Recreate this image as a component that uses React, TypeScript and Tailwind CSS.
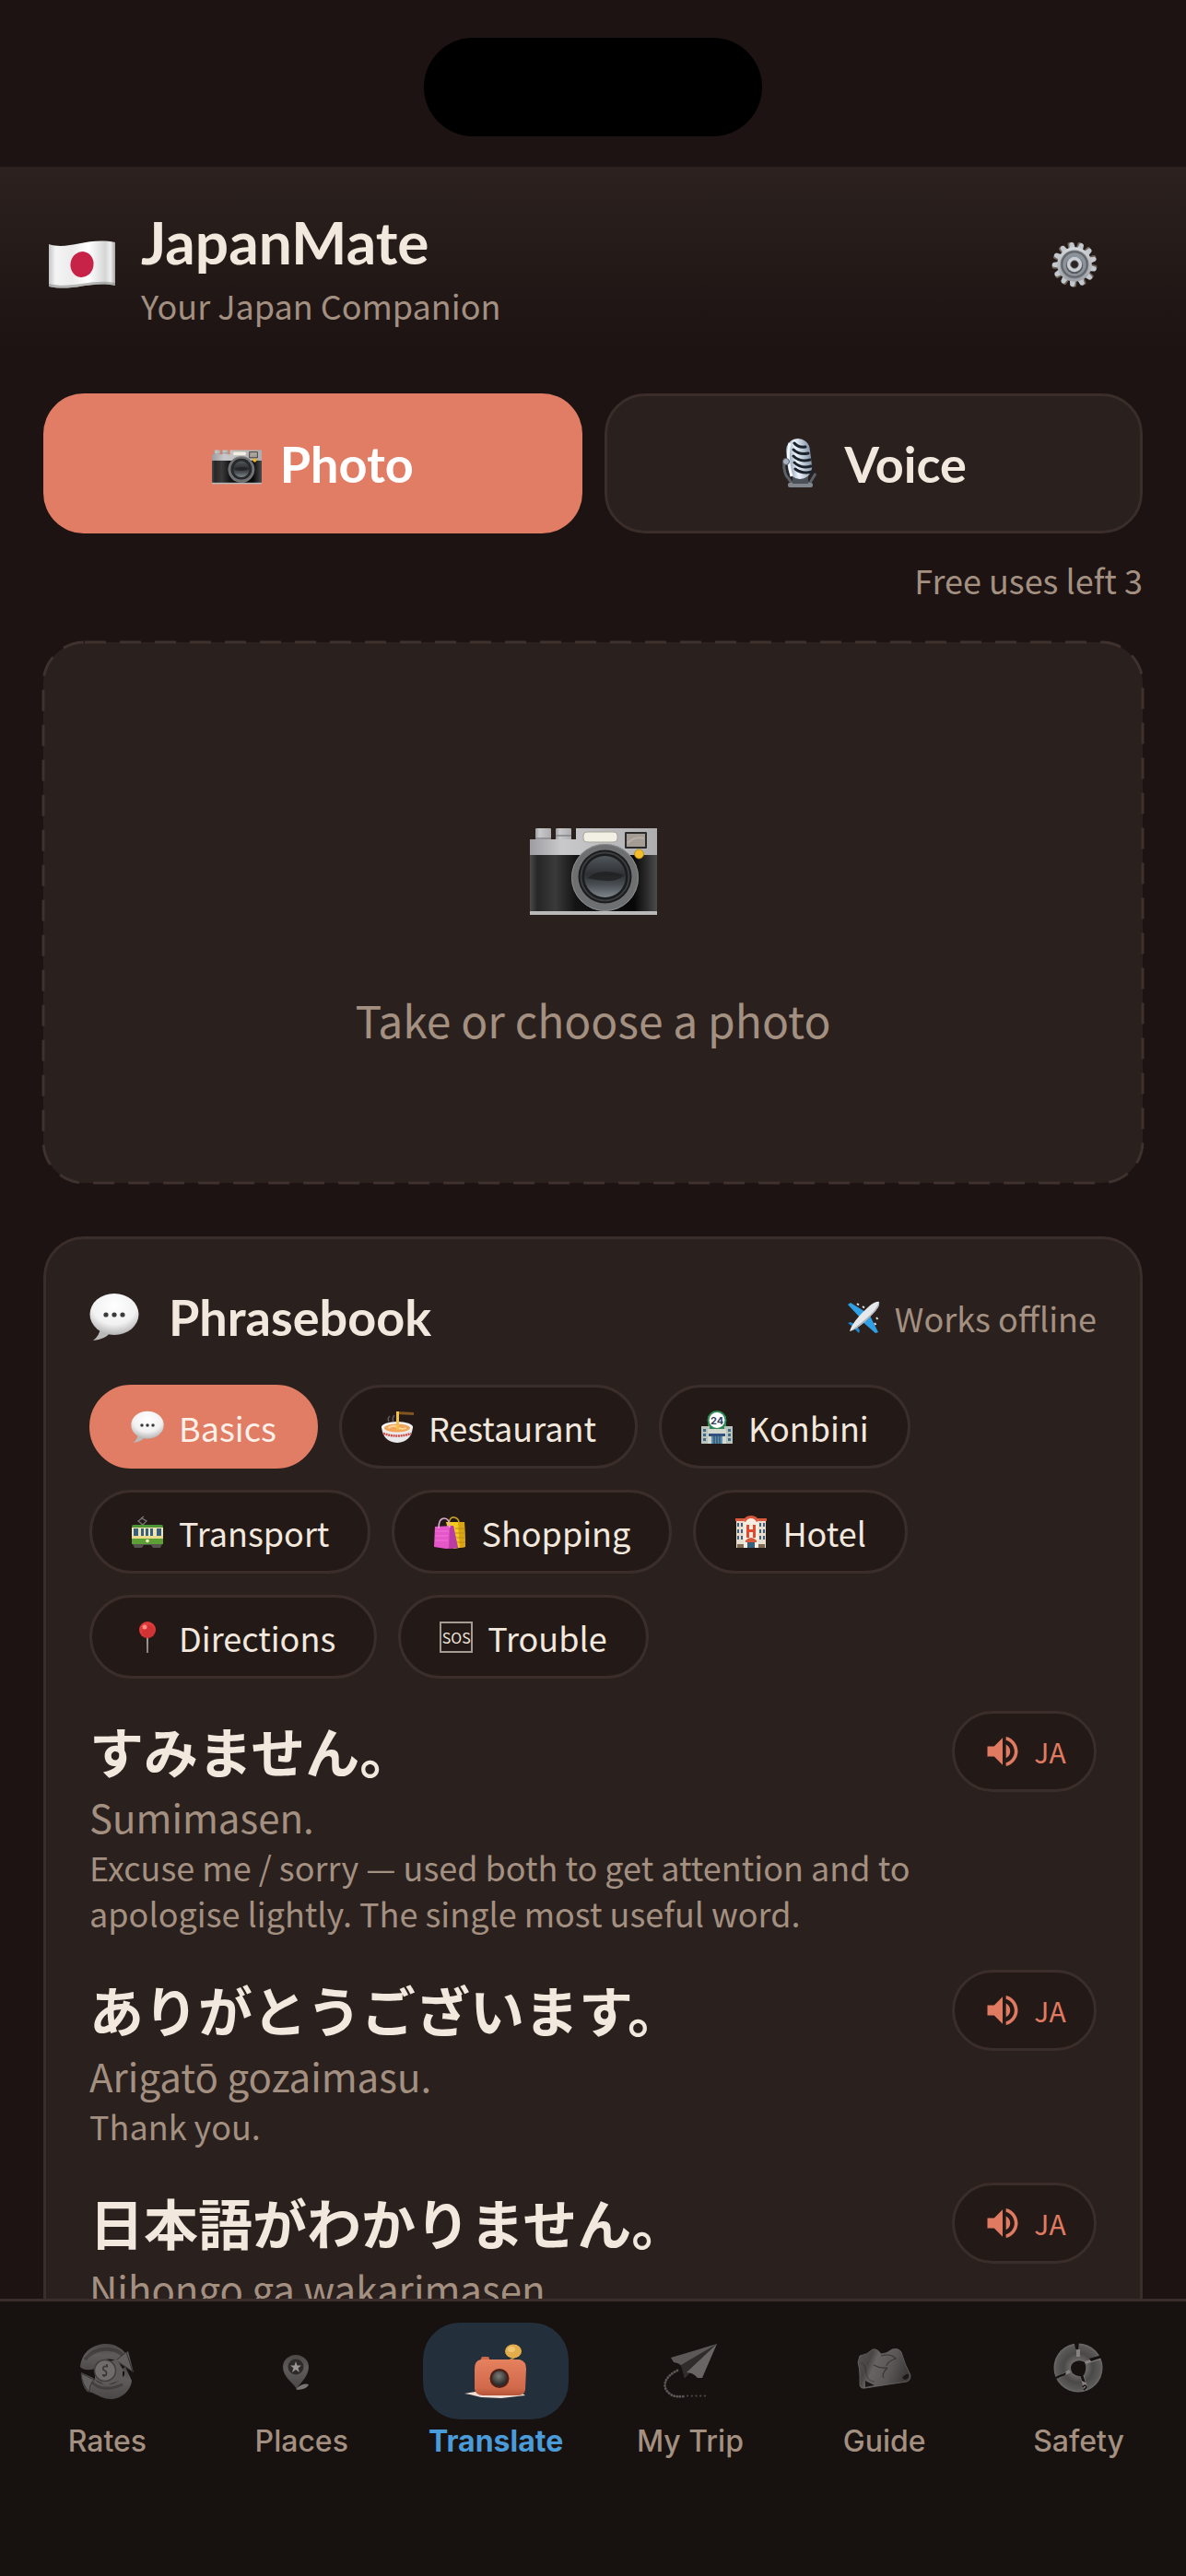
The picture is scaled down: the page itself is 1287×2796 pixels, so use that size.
import type { ReactNode } from 'react'

const Svg = ({ className, box, children }: { className: string; box: string; children: ReactNode }) => (
  <svg className={`shrink-0 ${className}`} viewBox={box} aria-hidden="true">{children}</svg>
)

// shared gradients, mounted once
const Gradients = () => (
  <svg className="absolute size-0" aria-hidden="true">
    <defs>
      <linearGradient id="flag" x1="0" x2="1" y1="0" y2="0">
        <stop offset="0" stopColor="#c4c4c4" />
        <stop offset=".1" stopColor="#f4f4f4" />
        <stop offset=".35" stopColor="#ececec" />
        <stop offset=".6" stopColor="#ffffff" />
        <stop offset=".85" stopColor="#d6d6d6" />
        <stop offset=".93" stopColor="#efefef" />
        <stop offset="1" stopColor="#a8a8a8" />
      </linearGradient>
      <linearGradient id="steel" x1="0" x2="0" y1="0" y2="1">
        <stop offset="0" stopColor="#d5d8dc" />
        <stop offset="1" stopColor="#9b9ea3" />
      </linearGradient>
      <linearGradient id="chrome" x1="0" x2="1" y1="0" y2="0">
        <stop offset="0" stopColor="#9d9da1" />
        <stop offset=".25" stopColor="#c9c9cb" />
        <stop offset="1" stopColor="#aeaeb0" />
      </linearGradient>
      <linearGradient id="leather" x1="0" x2="1" y1="0" y2="0">
        <stop offset="0" stopColor="#4a4a4a" />
        <stop offset=".06" stopColor="#262626" />
        <stop offset=".2" stopColor="#3a3a3a" />
        <stop offset=".36" stopColor="#141414" />
        <stop offset=".82" stopColor="#080808" />
        <stop offset=".93" stopColor="#303030" />
        <stop offset="1" stopColor="#4c4c4c" />
      </linearGradient>
      <linearGradient id="glass" x1="0" x2="0" y1="0" y2="1">
        <stop offset="0" stopColor="#50565c" />
        <stop offset=".45" stopColor="#2e3033" />
        <stop offset=".7" stopColor="#4a4f54" />
        <stop offset="1" stopColor="#7d868c" />
      </linearGradient>
      <radialGradient id="bubble" cx=".5" cy=".3" r=".75">
        <stop offset="0" stopColor="#ffffff" />
        <stop offset=".6" stopColor="#f1f1f1" />
        <stop offset="1" stopColor="#a9a9a9" />
      </radialGradient>
      <linearGradient id="mic" x1="0" x2="1" y1="0" y2="0">
        <stop offset="0" stopColor="#7e8fa3" />
        <stop offset=".4" stopColor="#eef6ff" />
        <stop offset="1" stopColor="#8595a8" />
      </linearGradient>
      <linearGradient id="ash" x1="0" x2="0" y1="0" y2="1">
        <stop offset="0" stopColor="#4b4846" />
        <stop offset=".4" stopColor="#5e5b5a" />
        <stop offset="1" stopColor="#4a4746" />
      </linearGradient>
      <linearGradient id="cloth" x1="0" x2="1" y1="0" y2=".3">
        <stop offset="0" stopColor="#565352" />
        <stop offset=".28" stopColor="#484544" />
        <stop offset=".4" stopColor="#666362" />
        <stop offset=".7" stopColor="#5a5756" />
        <stop offset="1" stopColor="#3f3c3b" />
      </linearGradient>
      <radialGradient id="ring" cx=".5" cy=".5" r=".5">
        <stop offset=".3" stopColor="#6c6a69" />
        <stop offset=".6" stopColor="#4b4948" />
        <stop offset=".9" stopColor="#5b5958" />
        <stop offset="1" stopColor="#6e6c6b" />
      </radialGradient>
      <linearGradient id="toy" x1="0" x2="0" y1="0" y2="1">
        <stop offset="0" stopColor="#e5815f" />
        <stop offset=".8" stopColor="#d0694a" />
        <stop offset="1" stopColor="#b4543a" />
      </linearGradient>
      <radialGradient id="toyLens" cx=".45" cy=".35" r=".6">
        <stop offset="0" stopColor="#7d7d78" />
        <stop offset="1" stopColor="#2b2c2a" />
      </radialGradient>
    </defs>
  </svg>
)

const FlagIcon = () => (
  <Svg className="h-[52px] w-[72px]" box="0 0 72 52">
    <path d="M0 4C22 11 41-4 72 2V49C46 43 26 56 0 50Z" fill="url(#flag)" />
    <path d="M0 47C26 53 46 41 72 46V49C46 43 26 56 0 50Z" fill="#8d8d8d" opacity=".6" />
    <ellipse cx="36" cy="26" rx="12.500" ry="14" fill="#c72348" transform="rotate(10 36 26)" />
  </Svg>
)

const GearIcon = () => (
  <Svg className="size-[52px]" box="0 0 54 54">
    {Array.from({ length: 13 }, (_, i) => (
      <g key={i} transform={`rotate(${i * (360 / 13) - 8} 27 27)`}>
        <rect x="22.500" y="1.500" width="6" height="10" rx="2" fill="#6c6259" />
        <path d="M23.500 12L24.500 3Q27 .500 29.500 3L31 12Z" fill="#c3c8cf" />
      </g>
    ))}
    <circle cx="27" cy="27" r="19.500" fill="url(#steel)" />
    <circle cx="27" cy="27" r="16" fill="#777c82" />
    <circle cx="27" cy="27" r="14" fill="#8c9299" stroke="#5e6267" strokeWidth="1.500" />
    <circle cx="27" cy="28" r="9.500" fill="#55585c" />
    <circle cx="27" cy="27" r="8.500" fill="#c9ced4" />
    <circle cx="27" cy="27" r="4.500" fill="#2a2321" stroke="#7a7d82" />
  </Svg>
)

const CameraIcon = ({ className }: { className: string }) => (
  <Svg className={className} box="0 0 138 96">
    <rect x="6" y="1" width="17" height="14" rx="1" fill="url(#chrome)" />
    <rect x="28" y="1" width="17" height="14" rx="1" fill="url(#chrome)" />
    <path d="M6 12H23M28 9H45" stroke="#85858a" strokeWidth="1.500" />
    <path d="M0 13H50V1H138V32H0Z" fill="url(#chrome)" />
    <rect y="30" width="138" height="62" fill="url(#leather)" />
    <rect y="91" width="138" height="4" fill="#b9b9b9" />
    <rect x="58" y="5" width="37" height="11" rx="4" fill="#f2efe5" stroke="#a9a69b" />
    <rect x="103" y="5" width="24" height="18" rx="1" fill="#2b2b2b" />
    <rect x="105" y="7" width="20" height="14" fill="#a59c94" />
    <path d="M106 17Q114 9 124 12" stroke="#b8b0a8" strokeWidth="2" fill="none" />
    <circle cx="81.500" cy="54.500" r="36.500" fill="#6e6f71" />
    <circle cx="81.500" cy="54.500" r="36" fill="none" stroke="#8a8b8d" />
    <circle cx="81.500" cy="53.500" r="29" fill="#1b1c1d" />
    <circle cx="81.500" cy="53.500" r="26" fill="none" stroke="#3c3d3f" strokeWidth="2" />
    <circle cx="81.500" cy="53.500" r="22.500" fill="url(#glass)" />
    <path d="M62 55Q72 47 84 48T102 52Q96 59 82 58T62 55Z" fill="#1d1e20" opacity=".7" />
    <circle cx="118.500" cy="29" r="5" fill="#f2bd2c" stroke="#b98512" strokeWidth=".8" />
  </Svg>
)

const MicIcon = () => (
  <Svg className="h-[54px] w-[42px]" box="0 0 38 54">
    <path d="M3 22Q0 30 4 40L10 48H30L36 38" fill="none" stroke="#59616b" strokeWidth="3" />
    <rect x="6" y="48" width="27" height="5" rx="2" fill="#81868c" />
    <path d="M11 40H28V49H11Z" fill="#4b5159" />
    <rect x="5" y="0" width="26" height="44" rx="13" fill="url(#mic)" transform="rotate(-7 18 22)" />
    <g stroke="#1c232d" strokeWidth="3" strokeLinecap="round" fill="none">
      <path d="M13 5Q17 10 25 9M12 12Q18 18 28 16M12 19Q19 26 30 23M13 26Q20 33 31 30M14 33Q22 39 32 36" />
    </g>
    <path d="M8 5Q4 20 10 41" stroke="#f2f8ff" strokeWidth="3" fill="none" />
    <circle cx="4" cy="25" r="3.500" fill="#aab4c0" stroke="#555d67" />
  </Svg>
)

const BubbleIcon = ({ className }: { className: string }) => (
  <Svg className={className} box="0 0 54 54">
    <path d="M12 38Q11 47 4 52Q17 51 23 43Z" fill="#b9b9b9" />
    <ellipse cx="27" cy="23.500" rx="26.500" ry="22.500" fill="url(#bubble)" />
    <circle cx="18" cy="24" r="2.600" fill="#3b3b3b" />
    <circle cx="27" cy="24" r="2.600" fill="#3b3b3b" />
    <circle cx="36" cy="24" r="2.600" fill="#3b3b3b" />
  </Svg>
)

const PlaneIcon = () => (
  <Svg className="size-9" box="0 0 36 36">
    <path d="M1 4L4 2L22 13L16 20Z" fill="#2fa0e6" />
    <path d="M34 34L31 35L15 21L24 14Z" fill="#2fa0e6" />
    <path d="M1 24L4 23L12 27L9 30Z M13 35L14 32L10 26L7 29Z" fill="#1f86cc" />
    <path d="M3 33Q6 22 25 5Q32 0 35 1Q36 5 31 11Q14 30 3 33Z" fill="#e6e9ec" />
    <path d="M3 33Q14 30 31 11Q36 5 35 1Q33 9 20 20T3 33Z" fill="#a9b0b7" />
    <path d="M11 3L13 4.500M17 6L19 7.500M32 18L33.500 20M30 24L31.500 26" stroke="#dfe3e6" strokeWidth="2" />
  </Svg>
)

const RamenIcon = () => (
  <Svg className="size-9" box="0 0 36 36">
    <path d="M17 1L36 2V5L17 4Z" fill="#80551f" />
    <path d="M9 12Q7 9 10 6M14 12Q12 9 15 5" stroke="#625c5a" strokeWidth="1.500" fill="none" />
    <path d="M1 17Q2 34 18 35Q34 34 35 17Z" fill="#e9e9ec" />
    <ellipse cx="18" cy="18" rx="17" ry="6" fill="#f5f5f5" />
    <ellipse cx="18" cy="19" rx="14" ry="4.500" fill="#f1a55c" />
    <path d="M8 19Q14 15 18 18T28 19" stroke="#ffd695" strokeWidth="1.800" fill="none" />
    <path d="M17 1H20V21H17Z" fill="#f0c04a" />
    <path d="M3 25Q18 30 33 25" stroke="#cf4b48" strokeWidth="2.500" strokeDasharray="2 .7" fill="none" />
  </Svg>
)

const StoreIcon = () => (
  <Svg className="size-9" box="0 0 36 36">
    <path d="M8 6H28V20H8Z" fill="#3d7c58" />
    <circle cx="18" cy="10.500" r="10.500" fill="#2f8a55" />
    <circle cx="18" cy="10.500" r="8.500" fill="#fff" />
    <text x="18" y="14.500" fontSize="11" fontWeight="700" textAnchor="middle" fill="#33415c" fontFamily="Inter, sans-serif">24</text>
    <path d="M1 17H10V36H1ZM26 17H35V36H26Z" fill="#b9c2bd" />
    <path d="M8 20H28V36H8Z" fill="#d4d8cf" />
    <path d="M3 20H6V23H3ZM3 25H6V28H3ZM3 30H6V33H3ZM30 20H33V23H30ZM30 25H33V28H30ZM30 30H33V33H30Z" fill="#3e6c87" />
    <path d="M9 25H27V28H9Z" fill="#32517e" />
    <path d="M12 28H24V36H12Z" fill="#5b8eaf" />
    <path d="M15 28V36M18 28V36M21 28V36" stroke="#243c55" />
  </Svg>
)

const TramIcon = () => (
  <Svg className="size-9" box="0 0 36 36">
    <path d="M13 10L8 6L12 3L17 6ZM11 3L14 1" stroke="#777" strokeWidth="1.300" fill="none" />
    <rect x="1" y="10" width="34" height="4" rx="2" fill="#4b9334" />
    <rect x="1" y="13" width="34" height="12" fill="#efe5b4" />
    <path d="M3 14H8V22H3ZM11 14H14V22H11ZM16 14H19V22H16ZM21 14H24V22H21ZM28 14H33V22H28Z" fill="#37607f" />
    <rect x="1" y="25" width="34" height="6" fill="#5b9f35" />
    <rect x="1" y="22" width="34" height="3" fill="#e9da8c" />
    <path d="M2 31H34L32 35H24L22 32H14L12 35H4Z" fill="#55524f" />
    <circle cx="18" cy="27.500" r="1.800" fill="#fff5c7" />
  </Svg>
)

const BagsIcon = () => (
  <Svg className="size-9" box="0 0 36 36">
    <path d="M17 9Q18 1 23 2T28 8" stroke="#c8a028" strokeWidth="1.600" fill="none" />
    <path d="M14 7H34L35 34L22 36Z" fill="#f3cb1f" />
    <path d="M27 7L34 7L35 34L29 35Z" fill="#d9a514" />
    <path d="M24 14H34M24 19H34M25 24H34M25 29H35" stroke="#b98a12" strokeWidth=".9" />
    <path d="M2 12L22 11L27 35L14 36L1 34Z" fill="#e556c9" />
    <path d="M18 11L22 11L27 35L17 36Z" fill="#b93da3" />
    <path d="M2 17H17M2 22H16M2 27H16" stroke="#f07ade" strokeWidth=".9" />
    <path d="M6 14Q6 3 12 3T18 13" stroke="#d9a9cf" strokeWidth="1.600" fill="none" />
  </Svg>
)

const HotelIcon = () => (
  <Svg className="size-9" box="0 0 36 36">
    <path d="M2 5H34V35H2Z" fill="#eadfcf" />
    <path d="M1 3H11V6H1ZM25 3H35V6H25Z" fill="#d9583b" />
    <path d="M10 35V7Q10 1 18 1T26 7V35Z" fill="#f6ece0" />
    <path d="M10 6Q11 0 18 0T26 6L24 7Q22 3 18 3T12 7Z" fill="#d9583b" />
    <path d="M13 10H16V15H20V10H23V24H20V18H16V24H13Z" fill="#e04a33" />
    <path d="M3 8H5V12H3ZM7 8H9V12H7ZM27 8H29V12H27ZM31 8H33V12H31ZM3 15H5V19H3ZM7 15H9V19H7ZM27 15H29V19H27ZM31 15H33V19H31ZM3 22H5V26H3ZM7 22H9V26H7ZM27 22H29V26H27ZM31 22H33V26H31Z" fill="#3f5f7b" />
    <path d="M12 27Q18 21 24 27V29H12Z" fill="#d9583b" />
    <path d="M14 29H22V35H14Z" fill="#35607c" />
    <path d="M3 31H10V35H3ZM26 31H33V35H26Z" fill="#7d6a52" />
  </Svg>
)

const PinIcon = () => (
  <Svg className="size-9" box="0 0 36 36">
    <path d="M17 16H19L18.800 35H17.200Z" fill="#a39d98" />
    <circle cx="18" cy="10" r="9" fill="#e03a3a" />
    <circle cx="19" cy="12" r="7" fill="#c22a2e" opacity=".5" />
    <circle cx="15" cy="7" r="2.500" fill="#ff8d86" />
  </Svg>
)

const SpeakerIcon = () => (
  <Svg className="size-11" box="0 0 24 24">
    <path fill="#e07b62" d="M3 9v6h4l5 5V4L7 9H3zm13.500 3c0-1.770-1.020-3.290-2.500-4.030v8.050c1.480-.730 2.500-2.250 2.500-4.020zM14 3.230v2.060c2.890.860 5 3.540 5 6.710s-2.110 5.850-5 6.710v2.060c4.010-.910 7-4.490 7-8.770s-2.990-7.860-7-8.770z" />
  </Svg>
)

const RatesIcon = () => (
  <Svg className="size-[62px]" box="0 0 62 62">
    <path d="M2 26C4 8 18 1 30 1C40 1 47 6 51 11L54 9L60 32L41 20C34 15 22 18 18 28C12 30 5 30 2 26Z" fill="url(#ash)" />
    <path d="M3 32L16 38C22 45 34 48 44 41L50 35V31H48V28L51 26L58 41C57 52 46 61 36 61C26 61 20 56 15 54L10 53C5 48 3 40 3 32Z" fill="url(#ash)" />
    <path d="M7 18Q18 5 34 7T50 20" stroke="#353231" strokeWidth="4" fill="none" opacity=".6" />
    <path d="M14 42Q26 55 48 45" stroke="#353231" strokeWidth="3" fill="none" opacity=".6" />
    <path d="M41 19L52 10L59 31Z" fill="#625f5e" stroke="#353231" />
    <path d="M3 33L17 40Q12 45 12 53Q4 46 3 33Z" fill="#625f5e" stroke="#353231" />
    <path d="M18 24L42 18L48 28V40L30 46L18 40Z" fill="#5d5a59" />
    <circle cx="29" cy="30" r="11.500" fill="#6f6c6b" stroke="#413e3d" strokeWidth="1.500" />
    <path d="M32 26Q26 24 27 29Q32 31 30 35L26 35M31 23V25M28 36V37" stroke="#3d3a39" strokeWidth="1.800" fill="none" />
  </Svg>
)

const PlacesIcon = () => (
  <Svg className="size-[62px]" box="7 -1 62 62">
    <path d="M32 49Q40 42 46 44Q45 49 34 50Z" fill="#777473" />
    <path d="M33 49C28 41 18 36 18 25A14 13 0 0 1 46 25C46 35 37 42 33 49Z" fill="url(#ash)" />
    <circle cx="32" cy="25" r="8.500" fill="#2d2a29" />
    <path d="M32 19L33.500 23.500L38 23.500L34.500 26.300L36 31L32 28L28 31L29.500 26.300L26 23.500L30.500 23.500Z" fill="#9a9796" />
  </Svg>
)

const TranslateIcon = () => (
  <Svg className="h-[62px] w-[68px]" box="0 0 68 62">
    <path d="M0 55L12 53L60 53L66 57L40 60L18 59L6 56Z" fill="#f1dfd6" />
    <path d="M47 19L52 16V12H55L54 17L50 19Z" fill="#c58f3a" />
    <ellipse cx="53" cy="9" rx="9" ry="7.500" fill="#e3ad4b" />
    <ellipse cx="51" cy="7" rx="4" ry="3" fill="#f0c573" />
    <rect x="18" y="15" width="9" height="8" rx="2" fill="#cf6848" />
    <path d="M18 18H60Q67 20 67 28L66 51Q65 57 57 57H20Q12 57 11 50V28Q11 19 18 18Z" fill="url(#toy)" />
    <circle cx="38" cy="38.500" r="10.500" fill="#4a2119" />
    <circle cx="38" cy="38.500" r="8" fill="url(#toyLens)" />
  </Svg>
)

const TripIcon = () => (
  <Svg className="size-[62px]" box="0 0 62 62">
    <path d="M60 1L10 16L13 21Q20 22 22 26L25 38Z" fill="#5b5857" />
    <path d="M60 1L21 24L25 38L32 30Z" fill="#2f2c2b" />
    <path d="M60 1L27 32Q34 32 39 38L44 38Z" fill="#686564" />
    <path d="M17 30C4 36 -2 48 10 56Q14 59 24 58" stroke="#5a5756" strokeWidth="2.800" strokeLinecap="round" strokeDasharray=".2 3" fill="none" />
    <path d="M28 57.500H48" stroke="#4e4b4a" strokeWidth="2" strokeLinecap="round" strokeDasharray=".2 4.500" fill="none" />
  </Svg>
)

const GuideIcon = () => (
  <Svg className="size-[62px]" box="0 0 62 62">
    <path d="M4 14Q12 13 18 7Q23 6 27 12Q33 12 39 7Q46 5 49 10Q53 24 59 35Q59 41 55 42L10 49Q5 50 4 46L4 36Q4 28 2 21Z" fill="url(#cloth)" stroke="#6a6766" strokeWidth=".8" />
    <path d="M10 41L20 46L10 48ZM50 38Q54 33 57 34Q58 39 53 40Z" fill="#1c1817" />
    <path d="M5 22Q10 22 11 32T20 42" stroke="#2f2c2b" strokeWidth="1.500" fill="none" opacity=".4" />
    <path d="M19 24Q26 28 34 27M27 14Q38 11 43 17Q34 20 33 25M34 27Q27 34 30 38" stroke="#2f2c2b" strokeWidth="1.200" fill="none" opacity=".8" />
  </Svg>
)

const SafetyIcon = () => (
  <Svg className="size-[62px]" box="0 2 62 62">
    <circle cx="30" cy="29" r="26.500" fill="url(#ring)" />
    <path d="M28 9H32V17H28ZM37 22L53 17L54 20L38 25ZM8 39L20 31L22 34L10 40ZM32 37L36 36L40 50L36 52Z" fill="#858281" />
    <path d="M25.500 1H31L30 9Q28 10 27 8ZM42 19L56 15V18L44 22ZM5 39L17 34L16 37L6 41ZM32 36H35L38 45L34 43Z" fill="#17110f" />
    <path d="M24 24Q30 19 37 23Q40 30 36 37Q30 40 24 35Q20 29 24 24Z" fill="#17110f" />
    <path d="M35 50Q38 46 39 50L36 53" stroke="#17110f" strokeWidth="1.500" fill="none" />
  </Svg>
)

const SosIcon = () => (
  <span className="flex h-[34px] w-9 items-center justify-center border-2 border-[#a49b93] text-[16px] leading-none">SOS</span>
)

const categories = [
  { label: 'Basics', icon: <BubbleIcon className="size-9" /> },
  { label: 'Restaurant', icon: <RamenIcon /> },
  { label: 'Konbini', icon: <StoreIcon /> },
  { label: 'Transport', icon: <TramIcon /> },
  { label: 'Shopping', icon: <BagsIcon /> },
  { label: 'Hotel', icon: <HotelIcon /> },
  { label: 'Directions', icon: <PinIcon /> },
  { label: 'Trouble', icon: <SosIcon /> },
]

const phrases = [
  {
    ja: 'すみません。',
    romaji: 'Sumimasen.',
    meaning: 'Excuse me / sorry — used both to get attention and to apologise lightly. The single most useful word.',
  },
  { ja: 'ありがとうございます。', romaji: 'Arigatō gozaimasu.', meaning: 'Thank you.' },
  { ja: '日本語がわかりません。', romaji: 'Nihongo ga wakarimasen.', meaning: 'I don’t understand Japanese.' },
]

const tabs = [
  { label: 'Rates', icon: <RatesIcon /> },
  { label: 'Places', icon: <PlacesIcon /> },
  { label: 'Translate', icon: <TranslateIcon /> },
  { label: 'My Trip', icon: <TripIcon /> },
  { label: 'Guide', icon: <GuideIcon /> },
  { label: 'Safety', icon: <SafetyIcon /> },
]

function Header() {
  return (
    <header className="flex items-center bg-linear-to-b from-[#2c211e] to-[#1c1312] px-[47px] pt-[38px] pb-[30px]">
      <div className="flex flex-1 items-center gap-7 pl-[6px]">
        <FlagIcon />
        <div>
          <h1 className="font-[Lato,sans-serif] text-[64px] leading-[88px] font-bold text-[#f2e8de]">JapanMate</h1>
          <p className="text-[36px] leading-[48px] text-[#a39081]">Your Japan Companion</p>
        </div>
      </div>
      <button type="button" aria-label="Settings" className="mr-12">
        <GearIcon />
      </button>
    </header>
  )
}

function ModeSwitch() {
  return (
    <div className="grid grid-cols-2 gap-6 font-[Lato,sans-serif] text-[54px] font-bold">
      <button type="button" className="flex h-[152px] items-center justify-center gap-5 rounded-[44px] bg-[#e07d64] text-white">
        <CameraIcon className="mt-2 h-[38px] w-[54px]" />
        Photo
      </button>
      <button type="button" className="flex h-[152px] items-center justify-center gap-7 rounded-[44px] border-3 border-[#3b2e2a] bg-[#2a201e] text-[#f2e8de]">
        <MicIcon />
        Voice
      </button>
    </div>
  )
}

function PhotoDrop() {
  return (
    <button type="button" className="relative mt-[42px] flex h-[587px] w-full flex-col items-center justify-center gap-[74px] rounded-[45px] bg-[#2a201e] pt-12">
      {/* long dashes, which a css border cannot give */}
      <svg className="absolute inset-0 size-full overflow-visible" aria-hidden="true">
        <rect width="100%" height="100%" rx="45" fill="none" stroke="#3f312d" strokeWidth="3" strokeDasharray="23 15" />
      </svg>
      <CameraIcon className="mt-3 h-24 w-[138px]" />
      <span className="text-[48px] leading-[76px] text-[#a39081]">Take or choose a photo</span>
    </button>
  )
}

function Phrasebook() {
  return (
    <section className="mt-[58px] rounded-[44px] border-3 border-[#3b2e2a] bg-[#2a201e] px-[47px] pt-[49px] pb-12">
      <div className="flex items-center justify-between">
        <h2 className="flex items-center gap-8 font-[Lato,sans-serif] text-[54px] leading-[72px] font-bold text-[#f2e8de]">
          <BubbleIcon className="size-[54px]" />
          Phrasebook
        </h2>
        <p className="flex items-center gap-4 text-[36px] leading-[54px] text-[#a39081]">
          <PlaneIcon />
          Works offline
        </p>
      </div>

      <div className="mt-[37px] flex flex-wrap gap-[23px]">
        {categories.map((c, i) => (
          <button
            key={c.label}
            type="button"
            className={`flex h-[91px] items-center gap-4 rounded-full border-3 px-[42px] text-[36px] ${
              i === 0 ? 'border-[#e07d64] bg-[#e07d64] text-[#fdf1ea]' : 'border-[#3b2e2a] bg-[#231a18] text-[#f2e8de]'
            }`}
          >
            {c.icon}
            {c.label}
          </button>
        ))}
      </div>

      <ul className="mt-[35px] flex flex-col gap-[37px]">
        {phrases.map((p) => (
          <li key={p.ja} className="flex items-start justify-between gap-6">
            <div>
              <p lang="ja" className="text-[59px] leading-[86px] font-bold text-[#f2e8de]">{p.ja}</p>
              <p className="text-[42px] leading-[58px] text-[#a39081]">{p.romaji}</p>
              <p className="text-[36px] leading-[50px] text-[#a39081]">{p.meaning}</p>
            </div>
            <button
              type="button"
              aria-label={`Play ${p.romaji}`}
              className="flex h-[88px] w-[157px] shrink-0 items-center justify-center gap-3 rounded-full border-3 border-[#3b2e2a] bg-[#231a18] text-[30px] text-[#e07b62]"
            >
              <SpeakerIcon />
              JA
            </button>
          </li>
        ))}
      </ul>
    </section>
  )
}

function TabBar() {
  return (
    <nav className="grid shrink-0 grid-cols-6 border-t-3 border-[#3b2e2a] bg-[#17110f] px-[11px] pt-[23px] pb-[127px] font-[Inter,sans-serif]">
      {tabs.map((t) => {
        const active = t.label === 'Translate'
        return (
          <a
            key={t.label}
            href={`#${t.label.toLowerCase().replace(' ', '-')}`}
            aria-current={active ? 'page' : undefined}
            className={`flex flex-col items-center gap-[5px] text-[32px] leading-[38px] ${active ? 'font-bold text-[#4a9bd9]' : 'font-medium text-[#a39081]'}`}
          >
            <span className={`flex h-[105px] w-[158px] items-center justify-center rounded-[40px] ${active ? 'bg-[#232f3a]' : ''}`}>
              {t.icon}
            </span>
            {t.label}
          </a>
        )
      })}
    </nav>
  )
}

export default function App() {
  return (
    <div className="flex h-screen flex-col bg-[#1c1312] font-['Noto_Sans_CJK_JP',sans-serif]">
      <Gradients />
      <div className="flex h-[181px] shrink-0 items-start justify-center pt-[41px]">
        <div className="h-[107px] w-[367px] rounded-full bg-black" />
      </div>
      <div className="min-h-0 flex-1 overflow-y-auto [scrollbar-width:none]">
        <Header />
        <main className="px-[47px] pt-[42px]">
          <ModeSwitch />
          <p className="mt-6 text-right text-[36px] leading-[52px] text-[#a39081]">Free uses left 3</p>
          <PhotoDrop />
          <Phrasebook />
        </main>
      </div>
      <TabBar />
    </div>
  )
}
